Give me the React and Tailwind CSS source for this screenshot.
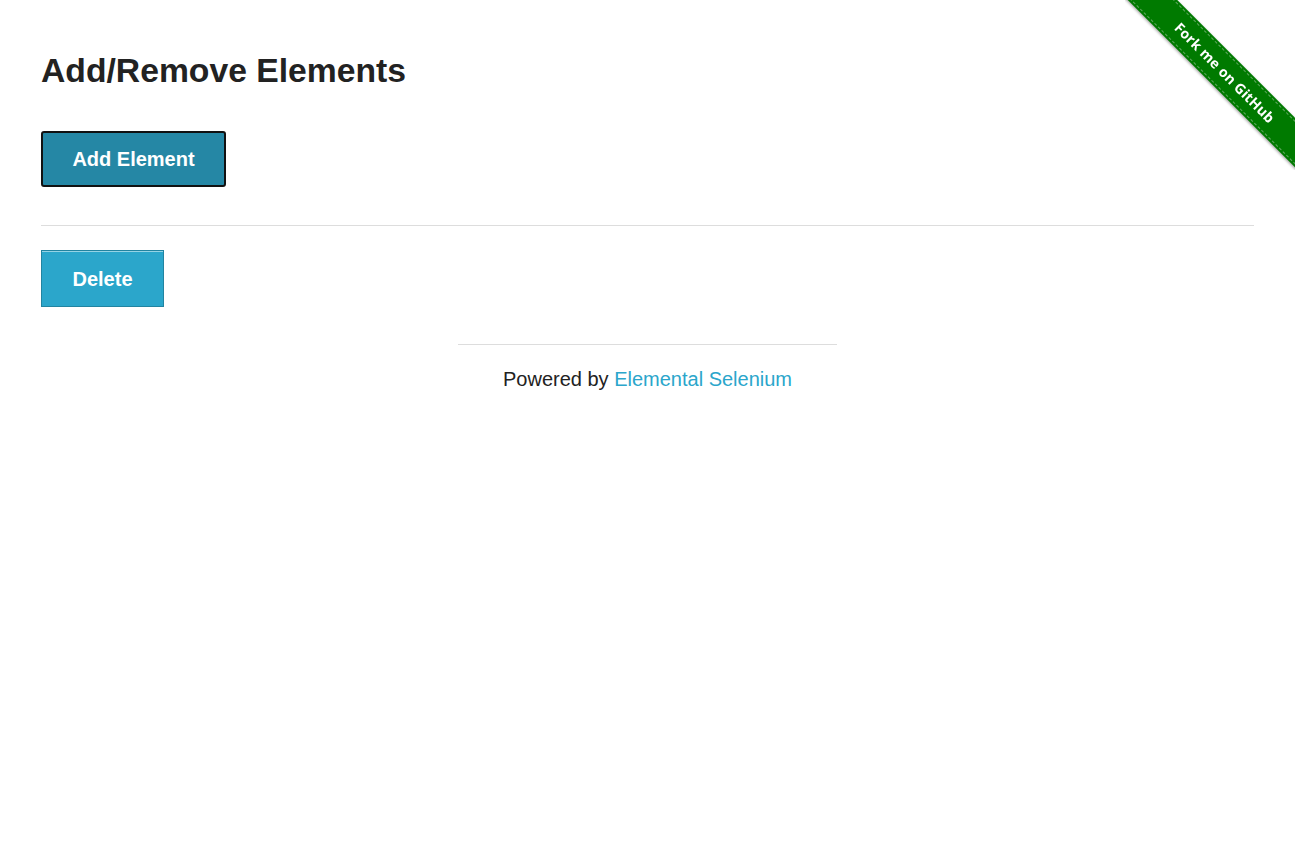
export default function App() {
  return (
    <div className="min-h-[843px] bg-white font-['Liberation_Sans',Arial,sans-serif] text-[#222]">
      <div className="fixed top-0 right-0 w-[170px] h-[170px] overflow-hidden">
        <a
          href="#"
          className="absolute left-[-30px] top-[55px] w-[260px] h-[35px] rotate-45 bg-[#007a00] flex items-center justify-center shadow-[0_1px_3px_rgba(0,0,0,0.4)]"
        >
          <span className="absolute inset-x-0 top-[2px] border-t border-dashed border-[#5fa85f]" />
          <span className="absolute inset-x-0 bottom-[2px] border-b border-dashed border-[#5fa85f]" />
          <span className="text-white text-[14px] font-bold tracking-[0.2px] font-['Open_Sans',sans-serif]">Fork me on GitHub</span>
        </a>
      </div>

      <div className="px-[41px] pt-[47px]">
        <h3 className="text-[33.7px] leading-[46px] font-bold">Add/Remove Elements</h3>
        <div className="mt-[38px]">
          <button className="w-[185px] h-[56px] bg-[#2587a5] border-2 border-[#111] rounded-[3px] text-white text-[20px] font-bold">
            Add Element
          </button>
        </div>
        <hr className="mt-[38px] border-t border-[#ddd]" />
        <div className="mt-[24px]">
          <button className="w-[123px] h-[57px] bg-[#2ba6cb] border border-[#2284a1] shadow-[inset_0_1px_0_rgba(255,255,255,0.5)] text-white text-[20px] font-bold">
            Delete
          </button>
        </div>
      </div>

      <div className="flex flex-col items-center mt-[37px]">
        <hr className="w-[379px] border-t border-[#ddd]" />
        <p className="mt-[22px] text-[20px] leading-[24px]">
          Powered by <a href="#" className="text-[#2ba6cb]">Elemental Selenium</a>
        </p>
      </div>
    </div>
  );
}
